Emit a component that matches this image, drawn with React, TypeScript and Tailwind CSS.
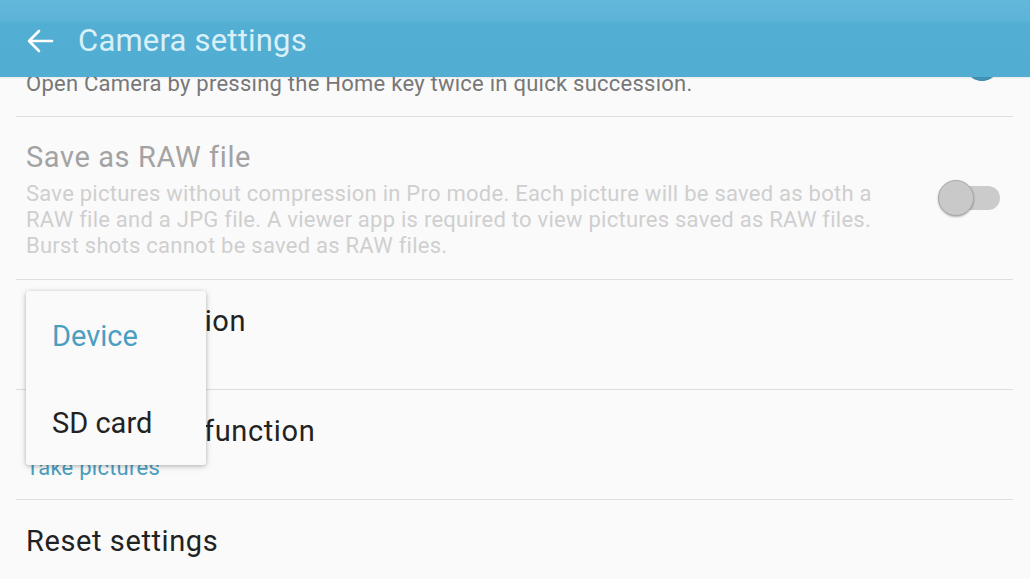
import React from "react";

function Toggle({ on }: { on: boolean }) {
  return (
    <div className="relative w-[62px] h-[38px] flex items-center shrink-0">
      <div
        className={
          "ml-[18px] w-[44px] h-[24px] rounded-full " +
          (on ? "bg-[#a9d5e6]" : "bg-[#cbcbcb]")
        }
      />
      <div
        className={
          "absolute top-[1px] w-[36px] h-[36px] rounded-full border " +
          (on
            ? "right-0 bg-[#4396b8] border-[#3a8aab]"
            : "left-0 bg-[#c9c9c9] border-[#a8a8a8] shadow-[0_1px_2px_rgba(0,0,0,0.3)]")
        }
      />
    </div>
  );
}

const title = "text-[29px] leading-[34px] tracking-[0.6px]";
const sub = "mt-[7px] text-[22px] leading-[26px] tracking-[0.25px] whitespace-nowrap";

export default function App() {
  return (
    <div
      className="w-[1030px] h-[579px] overflow-hidden bg-[#fafafa] relative"
      style={{ fontFamily: "Roboto, 'Noto Sans', sans-serif" }}
    >
      <header className="relative z-10 h-[77px] bg-[linear-gradient(to_bottom,#62b8da_0px,#5cb4d8_20px,#53aed3_24px,#52add2_77px)] flex items-center pl-[26px] shadow-[0_1px_2px_rgba(0,0,0,0.08)]">
        <svg width="28" height="24" viewBox="0 0 28 24" className="mr-[24px] mt-[4px]">
          <path
            d="M26 12H3M13 2L3 12l10 10"
            fill="none"
            stroke="#ffffff"
            strokeWidth="2.6"
            strokeLinecap="round"
            strokeLinejoin="round"
          />
        </svg>
        <h1 className="text-[31px] leading-none text-[#d9f0f9] mt-[4px] tracking-[0.2px]">
          Camera settings
        </h1>
      </header>

      <div className="relative -mt-[70px] ml-[16px] mr-[17px]">
        {/* Row 1 */}
        <div className="flex items-center justify-between h-[110px] px-[10px] border-b border-[#dedede]">
          <div className="pt-[23px] self-start">
            <div className={title + " text-[#222]"}>Quick launch</div>
            <div className={sub + " text-[#777]"}>
              Open Camera by pressing the Home key twice in quick succession.
            </div>
          </div>
          <div className="mr-[3px] mt-[2px]">
            <Toggle on />
          </div>
        </div>

        {/* Row 2 */}
        <div className="flex items-center justify-between h-[163px] px-[10px] border-b border-[#dedede]">
          <div className="pt-[23px] self-start">
            <div className={title + " text-[#a3a3a3]"}>Save as RAW file</div>
            <div className={sub + " text-[#cfcfcf]"}>
              Save pictures without compression in Pro mode. Each picture will be saved as both a
              <br />
              RAW file and a JPG file. A viewer app is required to view pictures saved as RAW files.
              <br />
              Burst shots cannot be saved as RAW files.
            </div>
          </div>
          <div className="mr-[3px] mt-[0px]">
            <Toggle on={false} />
          </div>
        </div>

        {/* Row 3 */}
        <div className="h-[110px] px-[10px] border-b border-[#dedede] pt-[24px]">
          <div className={title + " text-[#222]"}>Storage location</div>
          <div className={sub + " text-[#4a9fc0]"}>Device</div>
        </div>

        {/* Row 4 */}
        <div className="h-[110px] px-[10px] border-b border-[#dedede] pt-[24px]">
          <div className={title + " text-[#222]"}>Volume keys function</div>
          <div className={sub + " text-[#4a9fc0]"}>Take pictures</div>
        </div>

        {/* Row 5 */}
        <div className="h-[110px] px-[10px] pt-[24px]">
          <div className={title + " text-[#222]"}>Reset settings</div>
        </div>

        {/* Popup menu */}
        <div className="absolute left-[10px] top-[284px] w-[180px] bg-[#fafafa] rounded-[3px] shadow-[0_1px_4px_rgba(0,0,0,0.25),0_2px_8px_rgba(0,0,0,0.08)] flex flex-col">
          <div className="h-[87px] flex items-center pl-[26px] pt-[4px] text-[29px] text-[#4a9fc0]">Device</div>
          <div className="h-[87px] flex items-center pl-[26px] pt-[4px] text-[29px] text-[#222]">SD card</div>
        </div>
      </div>
    </div>
  );
}
